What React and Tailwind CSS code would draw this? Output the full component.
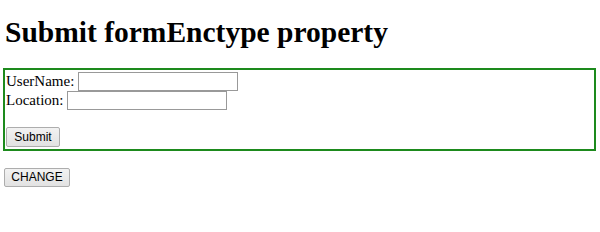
import React from 'react';

const App = () => {
  return (
    <div className="w-[600px] h-[232px] bg-white px-[3px] font-['Liberation_Serif',serif] text-black">
      <h1 className="pt-[15px] pl-[2px] text-[29.5px] leading-[34px] font-bold">Submit formEnctype property</h1>
      <form className="mt-[19px] w-[593px] h-[83px] border-2 border-[#1d8a1d] px-[1px] pt-[2px] text-[15px] leading-[19px]">
        <div className="flex items-center h-[19px]">
          <span>UserName:</span>
          <input type="text" className="ml-[4px] w-[160px] h-[19px] border border-[#999] bg-white" />
        </div>
        <div className="flex items-center h-[19px]">
          <span>Location:</span>
          <input type="text" className="ml-[4px] w-[160px] h-[19px] border border-[#999] bg-white" />
        </div>
        <div className="h-[17px]" />
        <button type="button" className="w-[54px] h-[20px] border border-[#adadad] bg-gradient-to-b from-[#f2f2f2] to-[#e2e2e2] rounded-[2px] font-['Liberation_Sans',sans-serif] text-[12px] leading-[18px]">Submit</button>
      </form>
      <button type="button" className="mt-[17px] ml-[1px] w-[66px] h-[19px] border border-[#adadad] bg-gradient-to-b from-[#f2f2f2] to-[#e2e2e2] rounded-[2px] font-['Liberation_Sans',sans-serif] text-[12px] leading-[17px]">CHANGE</button>
    </div>
  );
};

export default App;
